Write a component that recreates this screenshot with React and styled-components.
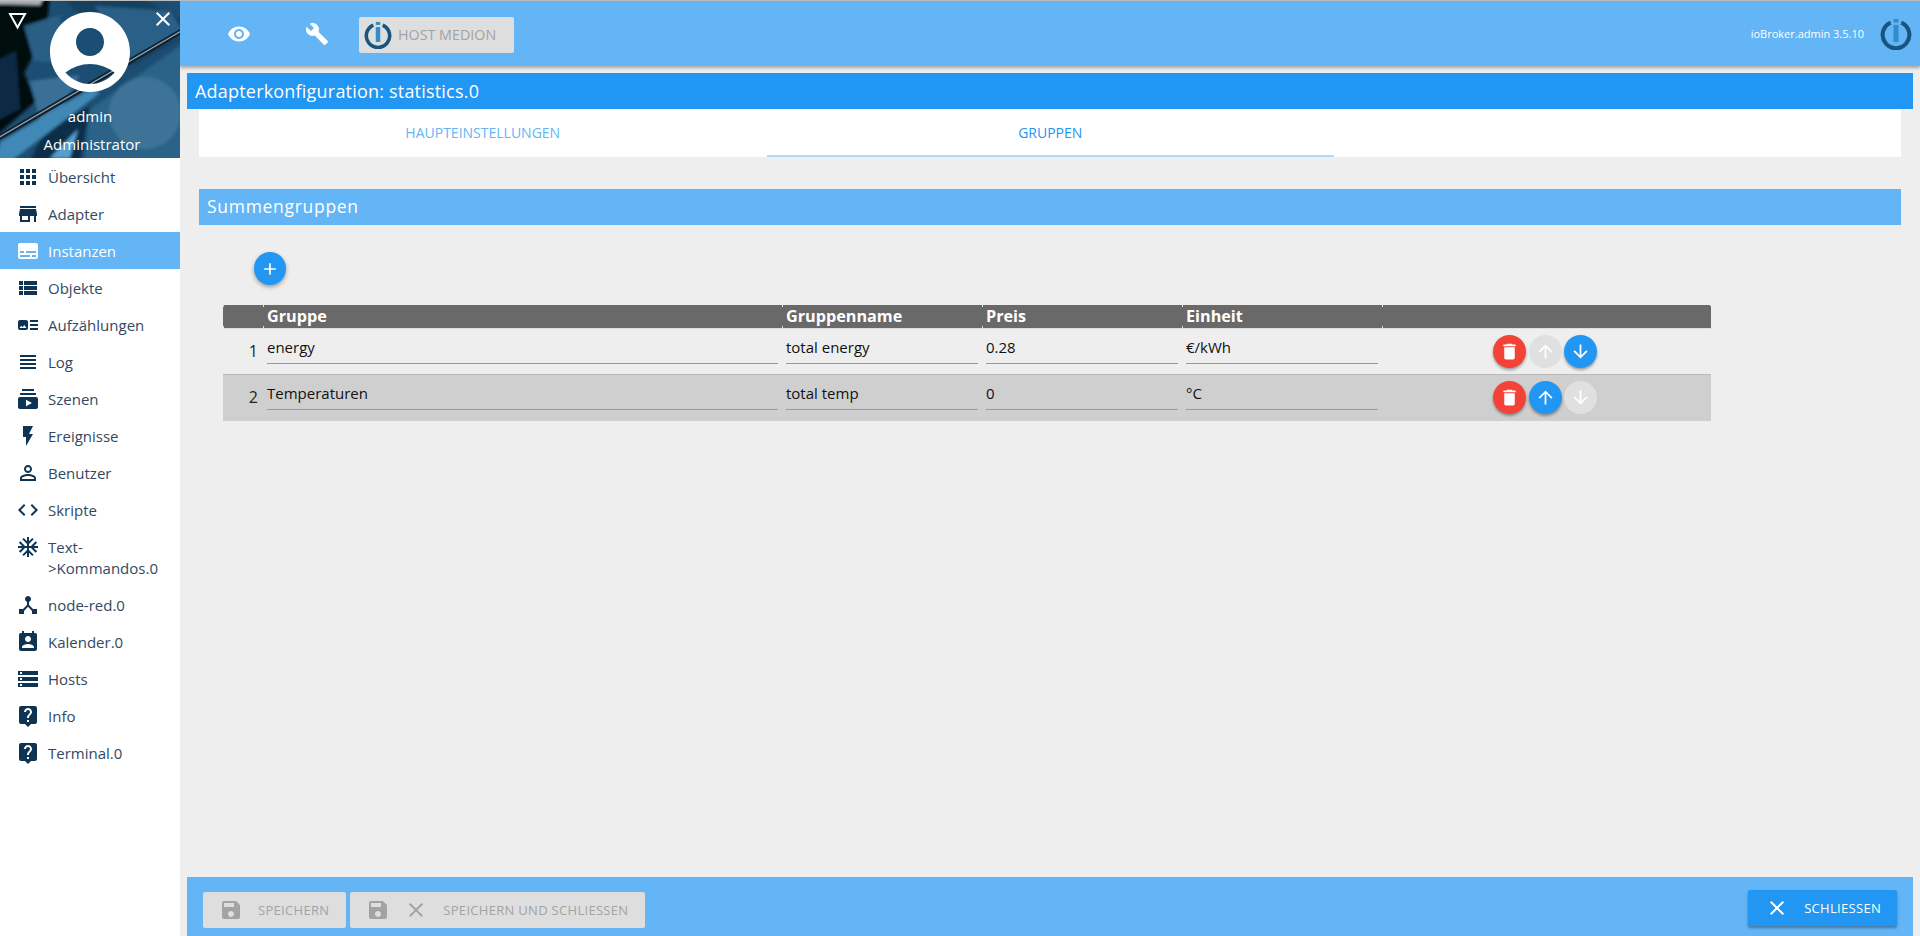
import React from "react";
import styled, { createGlobalStyle } from "styled-components";
import {
  MdApps, MdStore, MdSubtitles, MdViewList, MdArtTrack, MdViewHeadline, MdSubscriptions,
  MdFlashOn, MdPermIdentity, MdCode, MdAcUnit, MdDeviceHub, MdPermContactCalendar,
  MdStorage, MdLiveHelp, MdRemoveRedEye, MdBuild, MdDelete, MdArrowUpward, MdArrowDownward,
  MdSave, MdClose, MdAdd, MdAccountCircle,
} from "react-icons/md";

const GlobalStyle = createGlobalStyle`
  html, body {
    margin: 0;
    height: 100%;
    overflow: hidden;
    background: #eee;
    font-family: "Open Sans", "Noto Sans", sans-serif;
  }
  * { box-sizing: border-box; }
`;

const Page = styled.div`
  display: flex;
  height: 936px;
  width: 1920px;
  border-top: 1px solid #bdbdbd;
`;

const Sidebar = styled.aside`
  width: 180px;
  flex: none;
  background: #fff;
  display: flex;
  flex-direction: column;
`;

const Profile = styled.div`
  position: relative;
  height: 157px;
  overflow: hidden;
  background: #123654;
  color: #fff;
  display: flex;
  flex-direction: column;
  align-items: center;
  font-size: 15px;
  line-height: 27px;
`;

const ProfileArt = styled.svg`
  position: absolute;
  left: 0;
  top: 0;
  width: 180px;
  height: 157px;
`;

const Avatar = styled.div`
  position: relative;
  height: 100px;
  margin-top: 3px;
  font-size: 96px;
  line-height: 0;
  color: #fff;
`;

const ProfileName = styled.div`
  position: relative;
  height: 27px;
  margin-top: 1px;
  padding-left: ${(p) => p.$shift || 0}px;
`;

const CornerIcon = styled.div`
  position: absolute;
  top: ${(p) => p.$top}px;
  ${(p) => (p.$right ? "right: 5px;" : "left: 8px;")}
  line-height: 0;
  color: #fff;
`;

const Menu = styled.nav`
  display: flex;
  flex-direction: column;
`;

const MenuItem = styled.div`
  display: flex;
  align-items: flex-start;
  gap: 8px;
  padding: 9px 0 7px 16px;
  font-size: 15px;
  line-height: 21px;
  color: ${(p) => (p.$active ? "#fff" : "#33495f")};
  background: ${(p) => (p.$active ? "#64b5f6" : "transparent")};

  svg {
    flex: none;
    width: 24px;
    height: 24px;
    margin: -2px 0 -1px;
    color: ${(p) => (p.$active ? "#fff" : "#0f3352")};
  }
`;

const Main = styled.main`
  flex: 1;
  min-width: 0;
  display: flex;
  flex-direction: column;
`;

const TopBar = styled.header`
  height: 65px;
  flex: none;
  background: #64b5f6;
  box-shadow: 0 2px 3px rgba(0, 0, 0, 0.3);
  display: flex;
  align-items: center;
  padding: 0 8px 0 47px;
  color: #fff;
`;

const TopIcon = styled.div`
  width: 24px;
  height: 24px;
  margin-right: 54px;
  margin-top: 1px;
  color: #fff;
  svg { width: 24px; height: 24px; display: block; }
`;

const HostButton = styled.div`
  display: flex;
  align-items: center;
  gap: 6px;
  width: 155px;
  height: 36px;
  margin: 2px 0 0 -24px;
  padding-left: 5px;
  border-radius: 2px;
  background: #dedede;
  color: #a3a3a3;
  font-size: 14.3px;
`;

const Version = styled.div`
  margin-left: auto;
  margin-right: 16px;
  font-size: 11px;
`;

const Content = styled.div`
  flex: 1;
  display: flex;
  flex-direction: column;
  padding: 7px 7px 0;
  min-height: 0;
`;

const TitleBar = styled.div`
  height: 36px;
  flex: none;
  background: #2196f3;
  color: #fff;
  font-size: 18px;
  line-height: 36px;
  padding-left: 8px;
  letter-spacing: 0.2px;
`;

const Tabs = styled.div`
  display: flex;
  height: 48px;
  flex: none;
  margin: 0 12px;
  background: #fff;
`;

const Tab = styled.div`
  width: 567.5px;
  display: flex;
  align-items: center;
  justify-content: center;
  padding-top: 1px;
  font-size: 14px;
  color: ${(p) => (p.$active ? "#2196f3" : "#64b5f6")};
  border-bottom: 2px solid ${(p) => (p.$active ? "#b1dbfa" : "transparent")};
`;

const Section = styled.section`
  flex: 1;
  margin: 32px 12px 0;
`;

const SectionTitle = styled.div`
  height: 36px;
  background: #64b5f6;
  color: #fff;
  font-size: 17.5px;
  line-height: 35px;
  padding-left: 8px;
  letter-spacing: 0.7px;
`;

const AddButton = styled.div`
  width: 32px;
  height: 33px;
  margin: 27px 0 20px 55px;
  border-radius: 50%;
  background: #2196f3;
  color: #fff;
  display: flex;
  align-items: center;
  justify-content: center;
  box-shadow: 0 2px 4px rgba(0, 0, 0, 0.35);
  svg { width: 20px; height: 20px; }
`;

const Table = styled.div`
  width: 1488px;
  margin-left: 24px;
`;

const gridColumns = "40px 519px 200px 200px 200px 329px";

const TableHead = styled.div`
  display: grid;
  grid-template-columns: ${gridColumns};
  height: 24px;
  border-bottom: 1px solid #ddd;
  border-radius: 2px 2px 0 0;
  overflow: hidden;
`;

const HeadCell = styled.div`
  background: linear-gradient(#ddd, #ddd) left top / 1px 2px no-repeat,
    linear-gradient(#ddd, #ddd) left bottom / 1px 2px no-repeat, #696969;
  color: #fff;
  font-size: 16.2px;
  font-weight: 700;
  line-height: 22px;
  padding-left: 4px;
`;

const TableRow = styled.div`
  display: grid;
  grid-template-columns: ${gridColumns};
  height: 46px;
  background: ${(p) => (p.$shaded ? "#cfcfcf" : "transparent")};
  border-bottom: ${(p) => (p.$last ? "none" : "1px solid #b9b9b9")};
`;

const RowNumber = styled.div`
  text-align: right;
  padding: 11px 5px 0 0;
  font-size: 16px;
  line-height: 22px;
  color: #222;
`;

const Cell = styled.div`
  padding: 0 4px;
`;

const Field = styled.div`
  height: 35px;
  border-bottom: 1px solid #999;
  font-size: 15px;
  line-height: 22px;
  padding-top: 7px;
  color: #111;
`;

const ActionCell = styled.div`
  display: flex;
  justify-content: flex-start;
  gap: 2.5px;
  padding: 6px 0 0 111px;
`;

const RoundButton = styled.div`
  width: 33px;
  height: 33px;
  border-radius: 50%;
  display: flex;
  align-items: center;
  justify-content: center;
  color: #fff;
  background: ${(p) => p.$color};
  box-shadow: ${(p) => (p.$flat ? "none" : "0 2px 3px rgba(0, 0, 0, 0.35)")};
  svg { width: 21px; height: 21px; }
`;

const Footer = styled.footer`
  height: 59px;
  flex: none;
  background: #64b5f6;
  display: flex;
  align-items: flex-start;
  padding: 15px 16px 0;
  gap: 4px;
`;

const FooterButton = styled.div`
  display: flex;
  align-items: center;
  height: 36px;
  border-radius: 2px;
  padding: ${(p) => p.$padding};
  margin-top: ${(p) => (p.$raised ? "-2px" : "0")};
  margin-left: ${(p) => (p.$raised ? "auto" : "0")};
  background: ${(p) => (p.$primary ? "#2196f3" : "#dedede")};
  color: ${(p) => (p.$primary ? "#fff" : "#a3a3a3")};
  box-shadow: ${(p) => (p.$primary ? "0 2px 3px rgba(0, 0, 0, 0.35)" : "none")};
  font-size: 13px;
  letter-spacing: 0.3px;
  white-space: nowrap;
  svg { width: 24px; height: 24px; flex: none; }
`;

const ButtonIcon = styled.span`
  display: flex;
  margin-right: ${(p) => p.$gap}px;
`;

const menuItems = [
  { label: "Übersicht", icon: MdApps },
  { label: "Adapter", icon: MdStore },
  { label: "Instanzen", icon: MdSubtitles, active: true },
  { label: "Objekte", icon: MdViewList },
  { label: "Aufzählungen", icon: MdArtTrack },
  { label: "Log", icon: MdViewHeadline },
  { label: "Szenen", icon: MdSubscriptions },
  { label: "Ereignisse", icon: MdFlashOn },
  { label: "Benutzer", icon: MdPermIdentity },
  { label: "Skripte", icon: MdCode },
  { label: "Text->Kommandos.0", icon: MdAcUnit },
  { label: "node-red.0", icon: MdDeviceHub },
  { label: "Kalender.0", icon: MdPermContactCalendar },
  { label: "Hosts", icon: MdStorage },
  { label: "Info", icon: MdLiveHelp },
  { label: "Terminal.0", icon: MdLiveHelp },
];

const rows = [
  { name: "energy", group: "total energy", price: "0.28", unit: "€/kWh", up: false, down: true },
  { name: "Temperaturen", group: "total temp", price: "0", unit: "°C", up: true, down: false },
];

function Logo({ size }) {
  return (
    <svg width={size} height={size} viewBox="0 0 30 30" style={{ flex: "none" }}>
      <path
        d="M10 4.4 A12.5 12.5 0 1 0 20 4.4"
        fill="none"
        stroke="#17557f"
        strokeWidth="3.8"
      />
      <rect x="12.6" y="1" width="4.8" height="3.2" fill="#2f8ec9" />
      <rect x="12.6" y="6.5" width="4.8" height="16" fill="#2f8ec9" />
    </svg>
  );
}

function ProfilePicture() {
  return (
    <ProfileArt viewBox="0 0 180 157" preserveAspectRatio="none">
      <defs>
        <filter id="soft"><feGaussianBlur stdDeviation="1.6" /></filter>
      </defs>
      <rect width="180" height="157" fill="#1c4d72" />
      <g filter="url(#soft)">
        <polygon points="-4,-4 50,-4 46,30 24,72 36,100 -4,135" fill="#04090f" />
        <polygon points="-4,-4 44,-4 40,4 -4,3" fill="#a9b2bb" />
        <polygon points="24,25 60,14 66,62 34,60" fill="#2a5f85" />
        <polygon points="60,-4 140,-4 184,20 184,36 130,66 100,30" fill="#16405f" />
        <polygon points="95,5 170,10 184,32 130,58" fill="#2a6187" />
        <polygon points="30,80 80,74 60,110 40,120" fill="#3a7096" />
        <polygon points="-4,60 16,50 20,108 -4,120" fill="#0f2c44" />
        <polygon points="44,130 90,105 80,161 30,161" fill="#0d2f4a" />
        <polygon points="184,42 184,161 84,161 90,108" fill="#2b6288" />
        <circle cx="145" cy="112" r="36" fill="#3d7397" />
        <polygon points="50,157 78,128 70,157" fill="#55a0cf" />
        <polygon points="0,141 90,88 100,92 10,161 -4,161" fill="#3f89b6" />
      </g>
      <polygon points="0,133 180,28 180,34 0,139" fill="#10222f" />
      <polygon points="0,135 180,30 180,31.5 0,136.5" fill="#8fa3b0" />
    </ProfileArt>
  );
}

export default function App() {
  return (
    <>
      <GlobalStyle />
      <Page>
        <Sidebar>
          <Profile>
            <ProfilePicture />
            <CornerIcon $top={11}>
              <svg width="19" height="18" viewBox="0 0 19 18">
                <polygon points="2,2 17,2 9.5,15.5" fill="none" stroke="#fff" strokeWidth="2" />
              </svg>
            </CornerIcon>
            <CornerIcon $top={6} $right>
              <MdClose size={24} />
            </CornerIcon>
            <Avatar>
              <MdAccountCircle />
            </Avatar>
            <ProfileName>admin</ProfileName>
            <ProfileName $shift={4}>Administrator</ProfileName>
          </Profile>
          <Menu>
            {menuItems.map(({ label, icon: Icon, active }) => (
              <MenuItem key={label} $active={active}>
                <Icon />
                <span>{label}</span>
              </MenuItem>
            ))}
          </Menu>
        </Sidebar>
        <Main>
          <TopBar>
            <TopIcon><MdRemoveRedEye /></TopIcon>
            <TopIcon><MdBuild /></TopIcon>
            <HostButton>
              <Logo size={28} />
              HOST MEDION
            </HostButton>
            <Version>ioBroker.admin 3.5.10</Version>
            <Logo size={32} />
          </TopBar>
          <Content>
            <TitleBar>Adapterkonfiguration: statistics.0</TitleBar>
            <Tabs>
              <Tab>HAUPTEINSTELLUNGEN</Tab>
              <Tab $active>GRUPPEN</Tab>
            </Tabs>
            <Section>
              <SectionTitle>Summengruppen</SectionTitle>
              <AddButton><MdAdd /></AddButton>
              <Table>
                <TableHead>
                  <HeadCell />
                  <HeadCell>Gruppe</HeadCell>
                  <HeadCell>Gruppenname</HeadCell>
                  <HeadCell>Preis</HeadCell>
                  <HeadCell>Einheit</HeadCell>
                  <HeadCell />
                </TableHead>
                {rows.map((row, i) => (
                  <TableRow key={row.name} $shaded={i % 2 === 1} $last={i === rows.length - 1}>
                    <RowNumber>{i + 1}</RowNumber>
                    <Cell><Field>{row.name}</Field></Cell>
                    <Cell><Field>{row.group}</Field></Cell>
                    <Cell><Field>{row.price}</Field></Cell>
                    <Cell><Field>{row.unit}</Field></Cell>
                    <ActionCell>
                      <RoundButton $color="#f44336"><MdDelete /></RoundButton>
                      <RoundButton $color={row.up ? "#2196f3" : "#e0e0e0"} $flat={!row.up}>
                        <MdArrowUpward />
                      </RoundButton>
                      <RoundButton $color={row.down ? "#2196f3" : "#e0e0e0"} $flat={!row.down}>
                        <MdArrowDownward />
                      </RoundButton>
                    </ActionCell>
                  </TableRow>
                ))}
              </Table>
            </Section>
            <Footer>
              <FooterButton $padding="0 17px 0 16px">
                <ButtonIcon $gap={15}><MdSave /></ButtonIcon>
                SPEICHERN
              </FooterButton>
              <FooterButton $padding="0 17px 0 16px">
                <ButtonIcon $gap={14}><MdSave /></ButtonIcon>
                <ButtonIcon $gap={15}><MdClose /></ButtonIcon>
                SPEICHERN UND SCHLIESSEN
              </FooterButton>
              <FooterButton $primary $raised $padding="0 16px 0 17px">
                <ButtonIcon $gap={15}><MdClose /></ButtonIcon>
                SCHLIESSEN
              </FooterButton>
            </Footer>
          </Content>
        </Main>
      </Page>
    </>
  );
}
